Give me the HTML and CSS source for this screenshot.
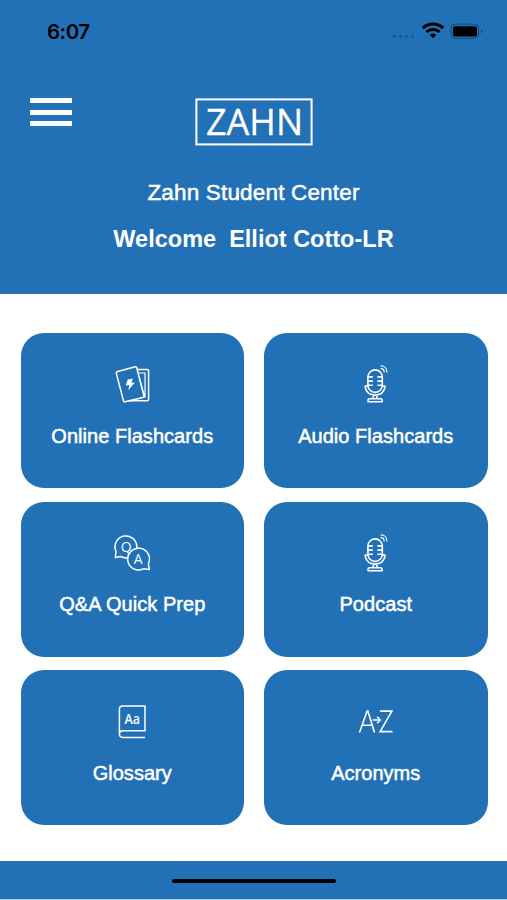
FILE: index.html
```
<!DOCTYPE html>
<html lang="en">
<head>
<meta charset="utf-8">
<title>Zahn Student Center</title>
<link rel="stylesheet" href="styles.css">
</head>
<body>
<svg class="defs" aria-hidden="true">
  <symbol id="mic" viewBox="-1.300 -.9 36 42">
    <g fill="none" stroke="currentColor" stroke-width="1.6" stroke-linecap="round" stroke-linejoin="round">
      <rect x="8.6" y="6" width="14.4" height="22.5" rx="7.2"/>
      <path d="M9 13h4M9 17.2h4M9 21.4h4M18.600 13h4M18.600 17.200h4M18.600 21.400h4"/>
      <path d="M8.400 22.200H6v1.600c1 4.600 4.800 7.400 9.800 7.400s8.800-2.800 9.800-7.400v-1.600H23.200M14 31.400v3.400M17.600 31.400v3.400M8.800 37.800v-1.600q0-1.400 1.400-1.400h11.200q1.400 0 1.400 1.400v1.600z"/>
      <path d="M21.800 2c3.400 0 5.800 2.400 5.800 6M21.800 4.800c2 0 3 1.200 3 3.200" stroke-width="1.200"/>
    </g>
  </symbol>
</svg>
<div class="screen">
  <header class="header">
    <div class="status">
      <span class="time">6:07</span>
      <svg class="indicators" viewBox="0 0 92 20" width="92" height="20" aria-hidden="true">
        <g fill="#195283"><circle cx="3.500" cy="16.500" r="1.400"/><circle cx="9.500" cy="16.500" r="1.400"/><circle cx="15.500" cy="16.500" r="1.400"/><circle cx="21.500" cy="16.500" r="1.400"/></g>
        <g fill="none" stroke="#000" stroke-width="3"><path d="M31.800 8.100c5.600-5.500 14.800-5.500 20.400 0M35.400 12c3.700-3.400 9.500-3.400 13.200 0"/></g>
        <path d="M38.600 14.700c1.900-1.700 4.900-1.700 6.800 0L42 18.200z"/>
        <rect x="60" y="4.200" width="27.500" height="14" rx="4" fill="none" stroke="#164a78"/>
        <rect x="62" y="6.200" width="24" height="10.300" rx="2.300"/>
        <path d="M90 9.100c2 1 2 3.500 0 4.500z" fill="#164a78"/>
      </svg>
    </div>
    <div class="brand-row">
      <div class="menu"><i></i><i></i><i></i></div>
      <div class="logo"><svg width="118" height="48" viewBox="0 0 118 48"><rect x="1.400" y="1.400" width="115.200" height="45" fill="none" stroke="#fff" stroke-width="2"/><text x="11" y="37" textLength="97" lengthAdjust="spacingAndGlyphs">ZAHN</text></svg></div>
    </div>
    <div class="title">Zahn Student Center</div>
    <div class="welcome">Welcome&nbsp; Elliot Cotto-LR</div>
  </header>
  <main class="grid">
    <div class="card">
      <svg class="icon" viewBox="-.6 -.6 36 42"><g fill="none" stroke="currentColor" stroke-width="1.500" stroke-linejoin="round"><path d="M2.300 8.200 20.600 3.200q1.200-.3 1.500.9l7.200 28.200q.3 1.200-.9 1.500L10.400 38.200q-1.200.3-1.500-.9L1.700 9.600q-.3-1.100.6-1.400z"/><path d="M23.200 5.800h9.400q1.400 0 1.400 1.400v28.600q0 1.400-1.400 1.400H14"/><path d="M24.400 9.400h6v24H28.500M24.600 14l5.400 19" stroke-width="1.200"/></g><path d="m13.200 16 5-1.200-1.200 4.600 3.300-.5-6.700 7.800 1.200-5.300-3.700.4z" fill="currentColor"/></svg>
      <span class="label">Online Flashcards</span>
    </div>
    <div class="card"><svg class="icon"><use href="#mic"/></svg><span class="label audio">Audio Flashcards</span></div>
    <div class="card">
      <svg class="icon" viewBox="0 0 36 42"><g fill="none" stroke="currentColor" stroke-width="1.500" stroke-linejoin="round"><path d="M6.800 24.500 1.300 25.500 2 19.400A10.900 10.900 0 1 1 22.700 16.300M6.800 24.500q3 1.700 6.600 1.300"/><path d="m35.300 37.600-5.800-.8a10.900 10.900 0 1 1 4.900-5z"/></g><text x="12.200" y="19.500" class="icon-text qa">Q</text><text x="24.300" y="31.500" class="icon-text qa">A</text></svg>
      <span class="label">Q&amp;A Quick Prep</span>
    </div>
    <div class="card"><svg class="icon"><use href="#mic"/></svg><span class="label">Podcast</span></div>
    <div class="card">
      <svg class="icon" viewBox="0 0 36 42"><path d="M31 37.400H9q-3.600 0-3.600-3.300T9 30.800h22V5.900H8.800q-3.400 0-3.400 3.400v24.800" fill="none" stroke="currentColor" stroke-width="1.500" stroke-linejoin="round"/><text x="18.300" y="24" textLength="15.500" lengthAdjust="spacingAndGlyphs" class="icon-text aa">Aa</text></svg>
      <span class="label">Glossary</span>
    </div>
    <div class="card">
      <svg class="icon" viewBox="-.3 0 36 42"><path d="M1.200 32.400 8.800 11h.8l6.600 21.400M3.800 25.200h10.300M21.800 11.100h11.800L21.800 31.600h12.400M14.400 20h7.400M18.800 16.800l3.200 3.200-3.200 3.200" fill="none" stroke="currentColor" stroke-width="1.600"/></svg>
      <span class="label">Acronyms</span>
    </div>
  </main>
  <footer class="footer"><div class="home"></div></footer>
</div>
</body>
</html>
```
FILE: styles.css
```
* { box-sizing: border-box; }
body {
  margin: 0;
  background: #fff;
  color: #fff;
  font-family: "Liberation Sans", Arial, sans-serif;
}
.defs { display: none; }
.screen {
  height: 900px;
  display: flex;
  flex-direction: column;
  border-bottom: 1px solid #b3cfe7;
}
.header {
  height: 293.5px;
  flex: none;
  background: #2270b5;
  text-align: center;
}
.status {
  height: 98px;
  padding: 20px 24px 0 47px;
  display: flex;
  justify-content: space-between;
  color: #000;
}
.time {
  font: 600 20.5px/24px Inter, sans-serif;
  letter-spacing: -.5px;
}
.brand-row {
  height: 49px;
  display: grid;
  grid-template-columns: 1fr 118px 1fr;
  align-items: start;
}
.menu {
  display: flex;
  flex-direction: column;
  gap: 6.500px;
  width: 42px;
  margin-left: 30px;
}
.menu i { height: 5px; background: #fff; }
.logo { grid-column: 2; height: 48px; }
.logo svg { display: block; }
.logo text {
  font: 36px "Open Sans", sans-serif;
  fill: #fff;
  stroke: #fff;
  stroke-width: .3px;
}
.title {
  margin-top: 33px;
  font-size: 22.500px;
  line-height: 26px;
  letter-spacing: .17px;
  -webkit-text-stroke: .5px #fff;
}
.welcome {
  margin-top: 19px;
  font-size: 23.500px;
  font-weight: 700;
  line-height: 28px;
}
.grid {
  flex: 1;
  display: grid;
  grid-template-columns: 1fr 1fr;
  grid-auto-rows: 155px;
  gap: 13.500px 20px;
  padding: 39.500px 19.500px 0 20.500px;
}
.card {
  border-radius: 23px;
  background: #2270b5;
  display: flex;
  flex-direction: column;
  align-items: center;
  padding-top: 30px;
}
.icon {
  width: 36px;
  height: 42px;
  display: block;
}
.icon-text {
  fill: currentColor;
  text-anchor: middle;
  font-family: "Open Sans", sans-serif;
}
.qa { font-size: 14px; font-weight: 500; }
.aa { font-size: 14px; font-weight: 600; }
.label {
  margin-top: 18.700px;
  font-size: 20px;
  line-height: 24px;
  letter-spacing: .04px;
  white-space: nowrap;
  -webkit-text-stroke: .5px #fff;
}
.footer {
  height: 38.500px;
  background: #2270b5;
  display: flex;
  justify-content: center;
  padding-top: 18.500px;
}
.home {
  width: 164px;
  height: 4px;
  border-radius: 2px;
  background: #000;
}
```
